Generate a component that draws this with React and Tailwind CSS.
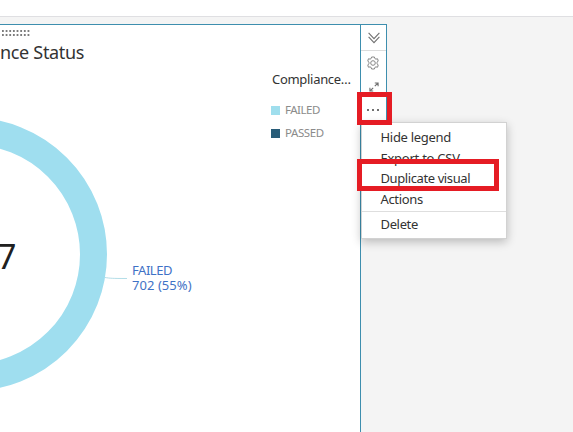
const menuItems = [
  { label: 'Hide legend', row: 'h-[22px] tracking-[-0.3px]' },
  { label: 'Export to CSV', row: 'h-5 tracking-[-0.25px]' },
  { label: 'Duplicate visual', row: 'h-5 tracking-[-0.4px]' },
  { label: 'Actions', row: 'h-[22px] tracking-[-0.35px]' },
];

const legend = [
  { label: 'FAILED', swatch: 'bg-[#9fdeed]', text: 'tracking-[-0.5px]' },
  { label: 'PASSED', swatch: 'bg-[#285c78]', text: 'tracking-[-0.4px]' },
];

function Grip() {
  return (
    <svg className="block" width="31" height="6" viewBox="0 0 31 6" stroke="#7c7c7c" strokeWidth="1.8">
      <path d="M2 1h28M2 5h28" strokeDasharray="1.8 1.850" />
    </svg>
  );
}

function Donut() {
  return (
    <svg className="block" width="130" height="274" viewBox="0 118 130 274" fill="none">
      <circle cx="-29.7" cy="254.3" r="123.2" stroke="#9fdeef" strokeWidth="27" />
      <path d="M105 277.500C110 278.300 112 278.500 127 278.500" stroke="#b4dee8" strokeWidth="1" />
    </svg>
  );
}

function Toolbar() {
  return (
    <div className="flex h-[150px] w-[26px] flex-col border-t border-r border-[#3d8eae] bg-white">
      <div className="flex h-[26px] items-center justify-center border-b border-[#dcdcdc]">
        <svg width="12" height="12" viewBox="0 0 12 12" fill="none" stroke="#707070" strokeWidth="1.1">
          <path d="M.6 .8 6 6.600l5.400-5.800M.6 4.800 6 10.600l5.400-5.800" />
        </svg>
      </div>
      <div className="flex h-[23px] items-center justify-center pr-[2px]">
        <svg width="12" height="14" viewBox="0 0 12 14" fill="none" stroke="#858585" strokeWidth="1">
          <path d="M4.600 1h2.800l.5 1.600 1 .5 1.700-.3L11.200 5l-1.100 1.200v1.600L11.200 9l-.6 2.200-1.700-.3-1 .5L7.400 13H4.600l-.5-1.600-1-.5-1.700.3L.8 9l1.100-1.200V6.200L.8 5l.6-2.200 1.700.3 1-.5z" />
          <circle cx="6" cy="7" r="2.300" />
        </svg>
      </div>
      <div className="flex h-[25px] items-center justify-center">
        <svg width="10" height="10" viewBox="0 0 10 10" fill="none" stroke="#707070" strokeWidth="1.1">
          <path d="M5.800 1h3.300v3.300M9 1 5.800 4.200M.9 5.700V9h3.300M1 9l3.200-3.200" />
        </svg>
      </div>
      <div className="flex h-[21px] items-center justify-center gap-[3px] pr-[2px]">
        <span className="size-[2px] bg-[#707070]" />
        <span className="size-[2px] bg-[#707070]" />
        <span className="size-[2px] bg-[#707070]" />
      </div>
    </div>
  );
}

function Menu() {
  return (
    <div className="absolute top-[122px] left-[361px] h-[117px] w-[146px] border border-[#d2d2d2] bg-white pt-1 text-[13px] text-[#333] shadow-[0_3px_9px_rgba(0,0,0,0.24)]">
      {menuItems.map((item) => (
        <div key={item.label} className={`flex items-center pl-[18.5px] whitespace-nowrap ${item.row}`}>
          {item.label}
        </div>
      ))}
      <div className="flex h-[27px] items-center border-t border-[#dedede] pl-[18.5px] tracking-[-0.35px]">Delete</div>
    </div>
  );
}

export default function App() {
  return (
    <div className="relative flex h-[432px] w-[573px] flex-col overflow-hidden bg-[#f4f4f4] font-['Noto_Sans','Open_Sans',sans-serif]">
      <header className="h-[17px] shrink-0 border-b border-[#dfdfe2] bg-white" />
      <main className="flex flex-1 items-start pt-[7px]">
        <section className="flex h-[408px] w-[361px] shrink-0 border-t border-r border-[#3d8eae] bg-white">
          <div className="w-[272px] shrink-0 pt-[5px]">
            <Grip />
            <h1 className="mt-1 h-6 text-[18px] leading-6 tracking-[-0.32px] whitespace-nowrap text-[#333]">nce Status</h1>
            <div className="relative mt-[54px] h-[274px]">
              <Donut />
              <div className="absolute top-[115px] left-[-3px] text-[34px] leading-[46px] text-[#202020]">7</div>
              <div className="absolute top-[145px] left-[132px] text-[13px] leading-[15px] whitespace-nowrap text-[#3f72c6]">
                <div className="tracking-[-0.45px]">FAILED</div>
                <div className="tracking-[0.05px]">702 (55%)</div>
              </div>
            </div>
          </div>
          <aside className="pt-[44px]">
            <h2 className="h-5 text-[13px] leading-5 tracking-[-0.3px] whitespace-nowrap text-[#333]">Compliance…</h2>
            <ul className="-ml-px pt-[10px]">
              {legend.map((entry) => (
                <li key={entry.label} className="flex h-[23px] items-center gap-[5px] text-[11.5px] leading-4 text-[#8b8b8b]">
                  <span className={`size-[9px] ${entry.swatch}`} />
                  <span className={`pb-px ${entry.text}`}>{entry.label}</span>
                </li>
              ))}
            </ul>
          </aside>
        </section>
        <Toolbar />
      </main>
      <Menu />
      <div className="absolute top-[92px] left-[357px] h-[33px] w-[35px] border-5 border-[#e51c24]" />
      <div className="absolute top-[159px] left-[357px] h-[32px] w-[142px] border-5 border-[#e51c24]" />
    </div>
  );
}
